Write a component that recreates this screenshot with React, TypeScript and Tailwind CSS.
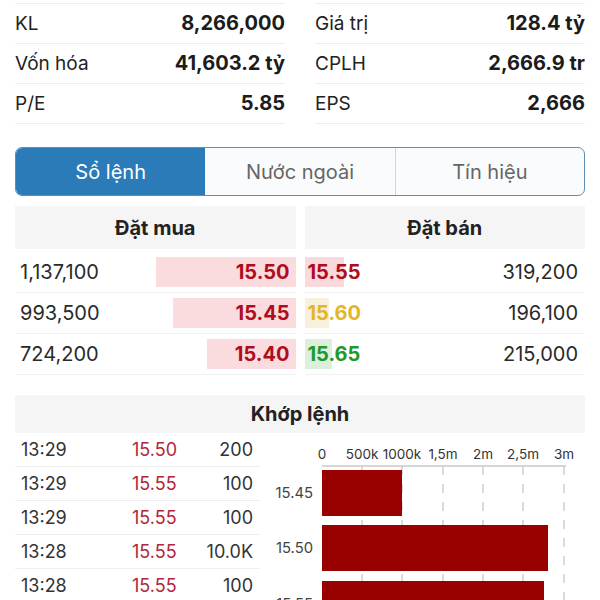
import React from "react";

const stats = [
  [["KL", "8,266,000"], ["Vốn hóa", "41,603.2 tỷ"], ["P/E", "5.85"]],
  [["Giá trị", "128.4 tỷ"], ["CPLH", "2,666.9 tr"], ["EPS", "2,666"]],
];

const buys = [
  { q: "1,137,100", p: "15.50", w: 140 },
  { q: "993,500", p: "15.45", w: 123 },
  { q: "724,200", p: "15.40", w: 89 },
];

const sells = [
  { q: "319,200", p: "15.55", w: 39, c: "text-[#b00d1c]", b: "bg-[#f9d9dc]" },
  { q: "196,100", p: "15.60", w: 24, c: "text-[#e3b52a]", b: "bg-[#f7f0da]" },
  { q: "215,000", p: "15.65", w: 27, c: "text-[#1e9a2c]", b: "bg-[#dcefdd]" },
];

const trades = [
  ["13:29", "15.50", "200"],
  ["13:29", "15.55", "100"],
  ["13:29", "15.55", "100"],
  ["13:28", "15.55", "10.0K"],
  ["13:28", "15.55", "100"],
];

function Chart() {
  const x0 = 62;
  const ticks = [
    ["0", 62],
    ["500k", 102],
    ["1000k", 142],
    ["1,5m", 183],
    ["2m", 223],
    ["2,5m", 263],
    ["3m", 304],
  ] as const;
  const bars = [
    { l: "15.45", y: 37, w: 80 },
    { l: "15.50", y: 92, w: 226 },
    { l: "15.55", y: 148, w: 222 },
  ];
  return (
    <svg width="325" height="167" className="block">
      {ticks.map(([t, x]) => (
        <text
          key={t}
          x={x}
          y={26}
          textAnchor="middle"
          fontSize="13.5"
          fill="#333"
          fontFamily="Inter, sans-serif"
        >
          {t}
        </text>
      ))}
      {ticks.slice(1).map(([t, x]) => (
        <line
          key={"g" + t}
          x1={x}
          x2={x}
          y1={33}
          y2={167}
          stroke="#cfcfcf"
          strokeWidth="1.5"
          strokeDasharray="9 9"
        />
      ))}
      <line x1={x0} x2={306} y1={33} y2={33} stroke="#c8c8c8" strokeWidth="1.5" />
      {bars.map((b) => (
        <g key={b.l}>
          <rect x={x0} y={b.y} width={b.w} height={46} fill="#990000" />
          <text
            x={53}
            y={b.y + 28}
            textAnchor="end"
            fontSize="14.8"
            fill="#444"
            fontFamily="Inter, sans-serif"
          >
            {b.l}
          </text>
        </g>
      ))}
    </svg>
  );
}

export default function App() {
  return (
    <div
      className="w-[600px] h-[600px] overflow-hidden bg-white text-[#222]"
      style={{ fontFamily: "Inter, 'Liberation Sans', sans-serif" }}
    >
      <div className="px-[15px] pt-[3px] grid grid-cols-2 gap-x-[30px]">
        {stats.map((col, i) => (
          <div key={i} className="border-t border-[#eeeeee]">
            {col.map(([l, v]) => (
              <div
                key={l}
                className="h-[40px] border-b border-[#eeeeee] flex items-center"
              >
                <div className="w-full flex items-baseline justify-between">
                  <span className="text-[19px] text-[#222]">{l}</span>
                  <span className="text-[20px] font-bold text-[#1c1c1c]">{v}</span>
                </div>
              </div>
            ))}
          </div>
        ))}
      </div>

      <div className="mx-[15px] mt-[23px] h-[49px] rounded-[7px] border border-[#5d8fb6] grid grid-cols-3 overflow-hidden bg-[#fafbfc]">
        <div className="bg-[#2a7bb8] flex items-center justify-center text-[20px] text-white">
          Sổ lệnh
        </div>
        <div className="flex items-center justify-center text-[20px] text-[#666]">
          Nước ngoài
        </div>
        <div className="border-l border-[#cfd6dc] flex items-center justify-center text-[20px] text-[#666]">
          Tín hiệu
        </div>
      </div>

      <div className="px-[15px] mt-[10px] grid grid-cols-2 gap-x-[9px]">
        <div>
          <div className="h-[43px] bg-[#f5f5f5] flex items-center justify-center text-[20px] font-bold text-[#222]">
            Đặt mua
          </div>
          <div className="mt-[3px]">
            {buys.map((r) => (
              <div
                key={r.q}
                className="h-[41px] border-b border-[#f1f1f1] flex items-center justify-between"
              >
                <span className="pl-[5px] text-[20px] text-[#2a2a2a]">{r.q}</span>
                <div
                  className="h-[30px] bg-[#fadcdf] flex items-center justify-end pr-[6px]"
                  style={{ width: r.w }}
                >
                  <span className="text-[20px] font-bold text-[#b00d1c]">{r.p}</span>
                </div>
              </div>
            ))}
          </div>
        </div>
        <div>
          <div className="h-[43px] bg-[#f5f5f5] flex items-center justify-center text-[20px] font-bold text-[#222]">
            Đặt bán
          </div>
          <div className="mt-[3px]">
            {sells.map((r) => (
              <div
                key={r.q}
                className="h-[41px] border-b border-[#f1f1f1] flex items-center justify-between"
              >
                <div className="relative h-[30px] flex items-center">
                  <div className={`absolute left-0 top-0 h-[30px] ${r.b}`} style={{ width: r.w }} />
                  <span className={`relative pl-[3px] text-[20px] font-bold ${r.c}`}>{r.p}</span>
                </div>
                <span className="pr-[7px] text-[20px] text-[#2a2a2a]">{r.q}</span>
              </div>
            ))}
          </div>
        </div>
      </div>

      <div className="mx-[15px] mt-[20px] h-[38px] bg-[#f5f5f5] flex items-center justify-center text-[20px] font-bold text-[#222]">
        Khớp lệnh
      </div>

      <div className="pl-[15px] flex">
        <div className="w-[245px]">
          {trades.map((t, i) => (
            <div
              key={i}
              className="h-[34px] border-b border-[#eeeeee] grid grid-cols-[117px_60px_1fr] items-center text-[18px]"
            >
              <span className="pl-[6px] text-[#333]">{t[0]}</span>
              <span className="text-[#b3263a]">{t[1]}</span>
              <span className="pr-[7px] text-right text-[#333]">{t[2]}</span>
            </div>
          ))}
        </div>
        <Chart />
      </div>
    </div>
  );
}
